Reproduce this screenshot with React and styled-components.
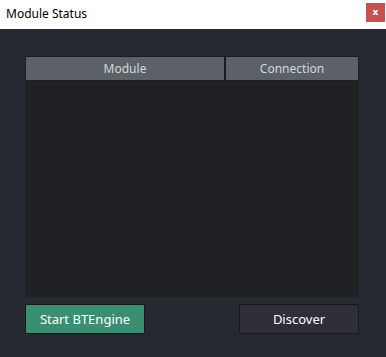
import React from 'react';
import styled, { createGlobalStyle } from 'styled-components';

const Global = createGlobalStyle`
  html, body {
    margin: 0;
    padding: 0;
    width: 386px;
    height: 357px;
    overflow: hidden;
    background: #262930;
  }
`;

const Window = styled.div`
  display: flex;
  flex-direction: column;
  width: 386px;
  height: 357px;
  font-family: "Noto Sans", "Open Sans", sans-serif;
`;

const TitleBar = styled.div`
  display: flex;
  align-items: center;
  justify-content: space-between;
  height: 29px;
  padding: 0 1px 0 6px;
  background: #ffffff;
  box-sizing: border-box;
`;

const Title = styled.span`
  font-size: 12px;
  color: #000000;
  margin-top: -2px;
`;

const CloseButton = styled.div`
  display: flex;
  align-items: center;
  justify-content: center;
  width: 19px;
  height: 19px;
  margin-top: -4px;
  background: #c75050;
  color: #ffffff;
  font-size: 9px;
  font-weight: 700;
  font-family: "DejaVu Sans", sans-serif;
  line-height: 1;
`;

const Content = styled.div`
  flex: 1;
  display: flex;
  flex-direction: column;
  gap: 7px;
  padding: 27px 27px 23px 25px;
  background: #262930;
`;

const Table = styled.div`
  display: flex;
  flex-direction: column;
  height: 241px;
  background: #1f2125;
`;

const HeaderRow = styled.div`
  display: flex;
  gap: 2px;
  height: 25px;
  padding: 1px;
  background: #1b1c20;
  box-sizing: border-box;
`;

const HeaderCell = styled.div`
  flex: ${(p) => p.$grow};
  display: flex;
  align-items: center;
  justify-content: center;
  background: #5c6068;
  color: #cfdcd6;
  font-size: 12px;
`;

const ButtonRow = styled.div`
  display: flex;
  justify-content: space-between;
`;

const Button = styled.div`
  display: flex;
  align-items: center;
  justify-content: center;
  width: 120px;
  height: 30px;
  box-sizing: border-box;
  border: 1px solid #17181c;
  border-radius: 2px;
  background: ${(p) => (p.$primary ? '#3a8f72' : '#2e2f38')};
  color: #ffffff;
  font-size: 13px;
`;

export default function App() {
  return (
    <>
      <Global />
      <Window>
        <TitleBar>
          <Title>Module Status</Title>
          <CloseButton>x</CloseButton>
        </TitleBar>
        <Content>
          <Table>
            <HeaderRow>
              <HeaderCell $grow={198}>Module</HeaderCell>
              <HeaderCell $grow={132}>Connection</HeaderCell>
            </HeaderRow>
          </Table>
          <ButtonRow>
            <Button $primary>Start BTEngine</Button>
            <Button>Discover</Button>
          </ButtonRow>
        </Content>
      </Window>
    </>
  );
}
